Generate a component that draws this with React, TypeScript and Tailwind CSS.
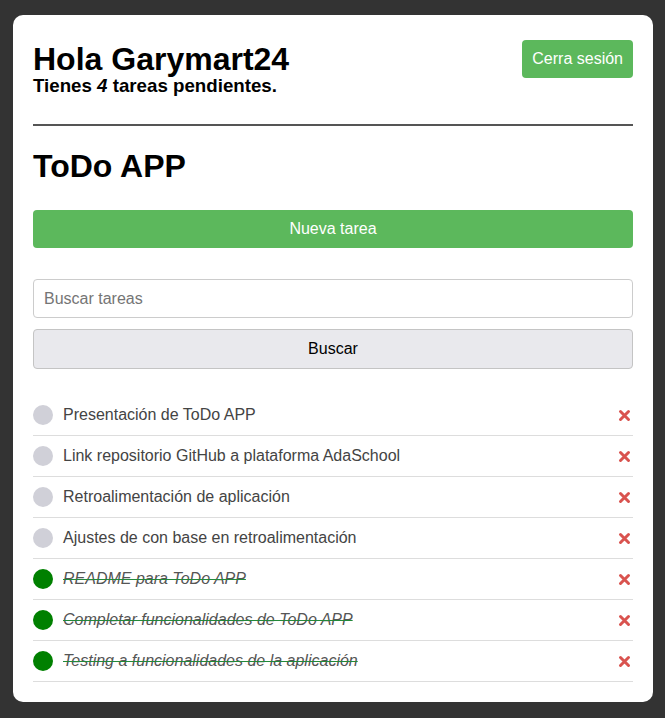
import { useState } from "react";

type Task = { text: string; completed: boolean };

const initialTasks: Task[] = [
  { text: "Presentación de ToDo APP", completed: false },
  { text: "Link repositorio GitHub a plataforma AdaSchool", completed: false },
  { text: "Retroalimentación de aplicación", completed: false },
  { text: "Ajustes de con base en retroalimentación", completed: false },
  { text: "README para ToDo APP", completed: true },
  { text: "Completar funcionalidades de ToDo APP", completed: true },
  { text: "Testing a funcionalidades de la aplicación", completed: true },
];

const DeleteIcon = () => (
  <svg width="13" height="13" viewBox="0 0 13 13">
    <path
      d="M2.5 2.5 L10.5 10.5 M10.5 2.5 L2.5 10.5"
      stroke="#d9534f"
      strokeWidth="3"
      strokeLinecap="round"
    />
  </svg>
);

const App = () => {
  const [tasks, setTasks] = useState(initialTasks);
  const [search, setSearch] = useState("");

  const pending = tasks.filter((t) => !t.completed).length;

  const toggle = (i: number) =>
    setTasks(tasks.map((t, idx) => (idx === i ? { ...t, completed: !t.completed } : t)));
  const remove = (i: number) => setTasks(tasks.filter((_, idx) => idx !== i));

  return (
    <div
      className="min-h-[718px] bg-[#333333] pt-[15px] pb-[16px]"
      style={{ fontFamily: '"Liberation Sans", Arial, sans-serif' }}
    >
      <div className="ml-[13px] w-[640px] rounded-[10px] bg-white px-[20px] pt-[25px] pb-[20px]">
        <div className="flex items-start justify-between">
          <div className="pt-[2px]">
            <h1 className="text-[32px] leading-[34px] font-bold text-black">Hola Garymart24</h1>
            <p className="text-[18.72px] leading-[20px] font-bold text-black">
              Tienes <em>{pending}</em> tareas pendientes.
            </p>
          </div>
          <button className="h-[38px] rounded-[4px] bg-[#5cb85c] px-[10px] text-[16px] text-white">
            Cerra sesión
          </button>
        </div>

        <hr className="mt-[28px] border-t-2 border-[#555555]" />

        <h2 className="mt-[24px] text-[32px] leading-[32px] font-bold text-black">ToDo APP</h2>

        <button className="mt-[28px] h-[38px] w-full rounded-[4px] bg-[#5cb85c] text-[16px] text-white">
          Nueva tarea
        </button>

        <input
          type="text"
          placeholder="Buscar tareas"
          value={search}
          onChange={(e) => setSearch(e.target.value)}
          className="mt-[31px] block h-[39px] w-full rounded-[4px] border border-[#cccccc] px-[10px] text-[16px] text-black placeholder:text-[#757575] outline-none"
        />
        <button className="mt-[11px] h-[40px] w-full rounded-[4px] border border-[#c4c4c4] bg-[#e9e9ed] text-[16px] text-black">
          Buscar
        </button>

        <ul className="mt-[26px]">
          {tasks.map((task, i) => (
            <li
              key={task.text}
              className="flex h-[41px] items-center border-b border-[#dddddd]"
            >
              <span
                onClick={() => toggle(i)}
                className={
                  task.completed
                    ? "h-[20px] w-[20px] shrink-0 rounded-full bg-[#008000]"
                    : "h-[20px] w-[20px] shrink-0 rounded-full bg-[#d0d0d8]"
                }
              />
              <p
                className={
                  task.completed
                    ? "ml-[10px] flex-1 text-[16px] text-[#555555] italic line-through decoration-[#23883a]"
                    : "ml-[10px] flex-1 text-[16px] text-[#444444]"
                }
              >
                {task.text}
              </p>
              <button onClick={() => remove(i)} className="mr-[2px] flex items-center">
                <DeleteIcon />
              </button>
            </li>
          ))}
        </ul>
      </div>
    </div>
  );
};

export default App;
